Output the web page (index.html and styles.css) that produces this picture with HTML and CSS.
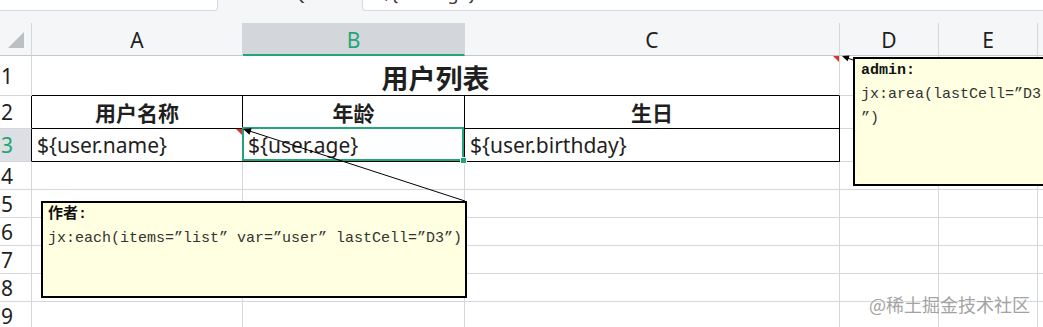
FILE: index.html
```html
<!DOCTYPE html>
<html lang="zh-CN">

<head>
    <meta charset="UTF-8">
    <meta name="viewport" content="width=device-width, initial-scale=1.0">
    <title>用户列表 - 模板</title>
    <link rel="stylesheet" href="styles.css">
</head>

<body>
    <div class="page">
        <div class="topbar">
            <div class="namebox"><span>B3</span></div>
            <div class="fxbox"><span>Q &nbsp;fx</span></div>
            <div class="formula"><span>${user.age}</span></div>
        </div>

        <div class="sheet">
            <!-- column headers -->
            <div class="colhead corner">
                <svg width="17" height="17" viewBox="0 0 17 17"><polygon points="16,0 16,16 0,16" fill="#bcbfc3"/></svg>
            </div>
            <div class="colhead">A</div>
            <div class="colhead active">B</div>
            <div class="colhead">C</div>
            <div class="colhead">D</div>
            <div class="colhead">E</div>
            <div class="colhead"></div>

            <!-- row 1 -->
            <div class="rowhead">1</div>
            <div class="cell title">用户列表</div>
            <div class="cell"></div>
            <div class="cell"></div>
            <div class="cell"></div>

            <!-- row 2 -->
            <div class="rowhead boxed">2</div>
            <div class="cell head">用户名称</div>
            <div class="cell head">年龄</div>
            <div class="cell head">生日</div>
            <div class="cell"></div>
            <div class="cell"></div>
            <div class="cell"></div>

            <!-- row 3 -->
            <div class="rowhead boxed active">3</div>
            <div class="cell data">${user.name}</div>
            <div class="cell data">${user.age}</div>
            <div class="cell data">${user.birthday}</div>
            <div class="cell"></div>
            <div class="cell"></div>
            <div class="cell"></div>

            <div class="rowhead">4</div>
            <div class="cell"></div><div class="cell"></div><div class="cell"></div><div class="cell"></div><div class="cell"></div><div class="cell"></div>
            <div class="rowhead">5</div>
            <div class="cell"></div><div class="cell"></div><div class="cell"></div><div class="cell"></div><div class="cell"></div><div class="cell"></div>
            <div class="rowhead">6</div>
            <div class="cell"></div><div class="cell"></div><div class="cell"></div><div class="cell"></div><div class="cell"></div><div class="cell"></div>
            <div class="rowhead">7</div>
            <div class="cell"></div><div class="cell"></div><div class="cell"></div><div class="cell"></div><div class="cell"></div><div class="cell"></div>
            <div class="rowhead">8</div>
            <div class="cell"></div><div class="cell"></div><div class="cell"></div><div class="cell"></div><div class="cell"></div><div class="cell"></div>
            <div class="rowhead">9</div>
            <div class="cell"></div><div class="cell"></div><div class="cell"></div><div class="cell"></div><div class="cell"></div><div class="cell"></div>
        </div>

        <!-- selected cell B3 -->
        <div class="selection"><span class="handle"></span></div>

        <!-- comment markers and leader lines -->
        <svg class="marks" width="1043" height="327" viewBox="0 0 1043 327">
            <polygon points="236,129 242,129 242,135" fill="#e0312b"/>
            <polygon points="833,56 839,56 839,62" fill="#e0312b"/>
            <line x1="465" y1="201" x2="248" y2="130.5" stroke="#000" stroke-width="1"/>
            <polygon points="243,129 249.5,134.8 251.7,128.2" fill="#000"/>
            <line x1="853" y1="60" x2="846" y2="57.5" stroke="#000" stroke-width="1"/>
            <polygon points="842,56 847.6,61.2 849.6,55.6" fill="#000"/>
        </svg>

        <div class="note note-each">
            <div class="author">作者:</div>
            <div>jx:each(items=”list” var=”user” lastCell=”D3”)</div>
        </div>

        <div class="note note-area">
            <div class="author">admin:</div>
            <div>jx:area(lastCell=”D3</div>
            <div>”)</div>
        </div>

        <div class="watermark">@稀土掘金技术社区</div>
    </div>
</body>

</html>
```

FILE: styles.css
```css
body {
    margin: 0;
    background-color: #ffffff;
    font-family: "Noto Sans", "Noto Sans CJK SC", sans-serif;
    color: #1f1f1f;
}

.page {
    position: relative;
    width: 1043px;
    height: 327px;
    overflow: hidden;
}

/* formula bar, only its bottom edge is visible */
.topbar {
    display: flex;
    height: 23px;
    background-color: #f5f6f8;
    font-size: 18px;
    color: #333;
}

.topbar > div {
    height: 10px;
    overflow: hidden;
    position: relative;
}

.topbar span {
    display: block;
    line-height: 20px;
    margin-top: -17px;
    white-space: nowrap;
}

.namebox {
    width: 217px;
    background-color: #ffffff;
    border-right: 1px solid #d6d9dd;
    border-bottom: 1px solid #d6d9dd;
    border-bottom-right-radius: 4px;
}

.namebox span {
    padding-left: 84px;
}

.fxbox {
    width: 144px;
}

.fxbox span {
    padding-left: 74px;
}

.formula {
    flex: 1;
    background-color: #ffffff;
    border-left: 1px solid #d6d9dd;
    border-bottom: 1px solid #d6d9dd;
    border-bottom-left-radius: 4px;
}

.formula span {
    padding-left: 18px;
}

/* grid */
.sheet {
    display: grid;
    grid-template-columns: 32px 211px 222px 375px 99px 99px 100px;
    grid-template-rows: 33px 40px 33px 33px repeat(6, 28px);
}

.sheet > div {
    box-sizing: border-box;
    border-right: 1px solid #d4d7db;
    border-bottom: 1px solid #d4d7db;
}

.colhead {
    display: flex;
    align-items: center;
    justify-content: center;
    background-color: #f5f6f8;
    font-size: 21px;
    padding-top: 2px;
    border-bottom-color: #c4c7cb !important;
}

.colhead.corner {
    justify-content: flex-start;
    padding: 9px 0 0 8px;
    align-items: flex-start;
}

.colhead.active {
    background-color: #d3d7dc;
    color: #21a675;
    border-bottom: 2px solid #21a675 !important;
    border-right-color: #d3d7dc;
}

.rowhead {
    display: flex;
    align-items: center;
    padding-left: 1px;
    font-size: 21px;
    background-color: #ffffff;
}

.rowhead.boxed {
    border-right-color: #000 !important;
}

.rowhead.active {
    background-color: #dcdfe3;
    color: #21a675;
}

.cell {
    display: flex;
    align-items: center;
    font-size: 21px;
    white-space: nowrap;
}

.cell.title {
    grid-column: span 3;
    justify-content: center;
    font-size: 27px;
    font-weight: bold;
    padding-top: 4px;
    border-bottom-color: #000;
    border-right-color: #d4d7db;
}

.cell.head {
    justify-content: center;
    font-weight: bold;
    border-right-color: #000;
    border-bottom-color: #000;
}

.cell.data {
    padding-left: 5px;
    border-right-color: #000;
    border-bottom-color: #000;
}

/* overlays */
.selection {
    position: absolute;
    left: 242px;
    top: 127px;
    width: 218px;
    height: 30px;
    border: 2.5px solid #25a47a;
}

.handle {
    position: absolute;
    right: -5px;
    bottom: -5px;
    width: 5px;
    height: 5px;
    background-color: #25a47a;
    border: 1px solid #ffffff;
}

.marks {
    position: absolute;
    left: 0;
    top: 0;
    pointer-events: none;
}

.note {
    position: absolute;
    box-sizing: border-box;
    background-color: #ffffe1;
    border: 2.5px solid #000;
    padding: 0 6px;
    font-family: "Liberation Mono", "Noto Sans CJK SC", monospace;
    font-size: 15px;
    line-height: 24px;
    color: #333;
    white-space: nowrap;
}

.note .author {
    font-weight: bold;
    color: #111;
}

.note-each {
    left: 41px;
    top: 201px;
    width: 426px;
    height: 97px;
    padding-left: 5px;
}

.note-area {
    left: 853px;
    top: 57px;
    width: 210px;
    height: 129px;
}

.watermark {
    position: absolute;
    left: 869px;
    top: 291px;
    font-family: "Noto Sans CJK SC", sans-serif;
    font-size: 18px;
    color: #a3a3a3;
    text-shadow: 0 0 2px #ffffff;
}
```
